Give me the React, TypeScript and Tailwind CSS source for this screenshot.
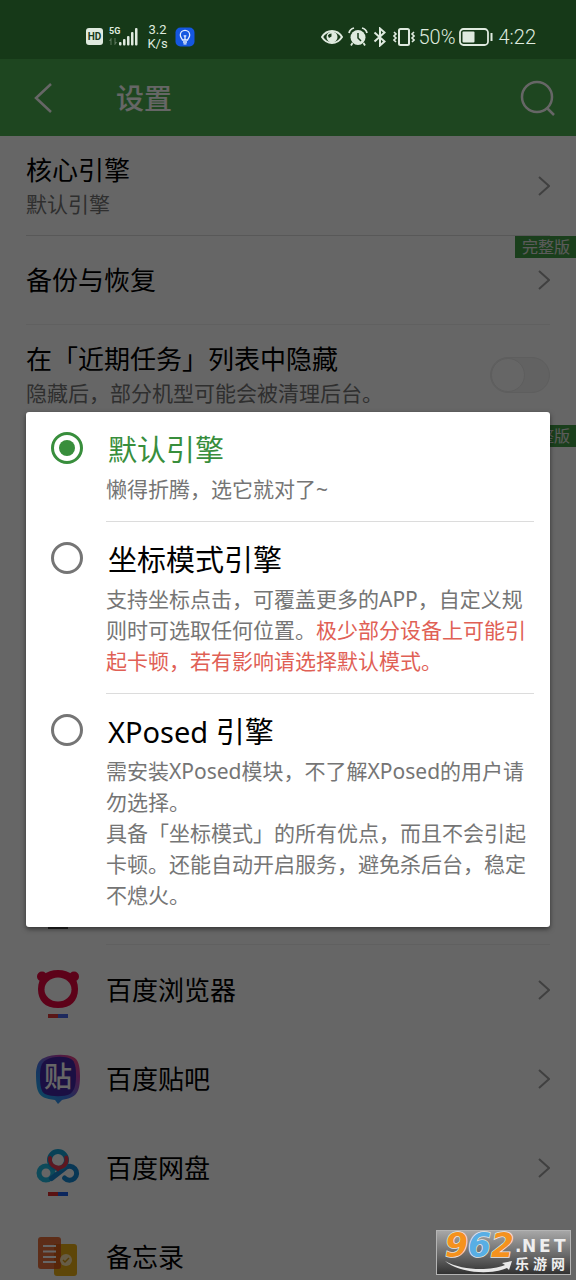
import { useState } from "react";
import type { ReactNode } from "react";

const engines = [
  {
    id: "default",
    title: "默认引擎",
    desc: <>懒得折腾，选它就对了~</>,
  },
  {
    id: "position",
    title: "坐标模式引擎",
    desc: (
      <>
        支持坐标点击，可覆盖更多的APP，自定义规则时可选取任何位置。
        <span className="text-[#e06055]">极少部分设备上可能引起卡顿，若有影响请选择默认模式。</span>
      </>
    ),
  },
  {
    id: "xposed",
    title: "XPosed 引擎",
    desc: (
      <>
        需安装XPosed模块，不了解XPosed的用户请勿选择。
        <br />
        具备「坐标模式」的所有优点，而且不会引起卡顿。还能自动开启服务，避免杀后台，稳定不熄火。
      </>
    ),
  },
];

const BrowserIcon = () => (
  <svg viewBox="0 -4 44 50" className="w-11 h-[50px] overflow-visible">
    <circle cx="6" cy="7.500" r="5" fill="#e8053f" />
    <circle cx="38" cy="7.500" r="5" fill="#e8053f" />
    <path d="M22 1C34 1 42 8 42 20S35 39 22 39 2 32 2 20 10 1 22 1Z" fill="#e8053f" />
    <ellipse cx="22" cy="20.500" rx="13.500" ry="12" fill="#fff" />
    <path d="M12 45h10v4H12z" fill="#e03a3a" />
    <path d="M22 45h10v4H22z" fill="#4a68e8" />
  </svg>
);

const TiebaIcon = () => (
  <svg viewBox="0 0 44 50" className="w-11 h-[50px]">
    <defs>
      <linearGradient id="tieba" x1="0" y1="1" x2="1" y2="0">
        <stop offset="0" stopColor="#12c6f5" />
        <stop offset="0.4" stopColor="#3d7cf0" />
        <stop offset="0.75" stopColor="#c040b0" />
        <stop offset="1" stopColor="#ff4a70" />
      </linearGradient>
    </defs>
    <path d="M8 4C16 0 31 0 37 3c5 2 7 8 7 19 0 12-2 18-8 21-4 2-8 2-10 3l-4 4-3-4C10 45 4 43 2 37 0 32 0 23 0 18 1 10 3 6 8 4Z" fill="url(#tieba)" />
    <path d="M10 6c7-4 19-4 25-1 4 2 5 8 5 17 0 10-2 15-6 18-6 3-18 3-25 0-4-2-5-9-5-17C4 14 5 9 10 6Z" fill="#4427a8" />
    <text x="22" y="33" textAnchor="middle" fontSize="28" fontWeight="500" fill="#fff">
      贴
    </text>
  </svg>
);

const NetdiskIcon = () => (
  <svg viewBox="0 -5 44 50" className="w-11 h-[50px] overflow-visible" fill="none" strokeWidth="5" strokeLinecap="round">
    <circle cx="10" cy="25" r="7" stroke="#22b8e0" />
    <path d="M28.500 30A7 7 0 1 0 29 20L15.500 30.500" stroke="#1689d4" />
    <circle cx="22" cy="12" r="8.500" stroke="#16a4d8" />
    <path d="M14 10a8.500 8.500 0 0 0 16 5c.8-2 .8-4 .2-5.500" stroke="#e83a50" strokeWidth="4" />
    <path d="m17 19 5 4.500 5-4.500z" fill="#e83a50" />
    <path d="M12 44h10v4H12z" fill="#e02f2f" />
    <path d="M22 44h10v4H22z" fill="#1c60e8" />
  </svg>
);

const MemoIcon = () => (
  <svg viewBox="0 0 44 50" className="w-11 h-[50px]">
    <rect x="18" y="12" width="23" height="32" rx="3" fill="#eaae16" />
    <rect x="2" y="5" width="23" height="32" rx="3" fill="#e8703c" />
    <path d="M18 12h7v22q0 3-3 3h-4z" fill="#dd6018" />
    <path d="M7 14h13M7 19.500h13M7 25h13M7 30h13" stroke="#fff" strokeWidth="2" />
    <circle cx="30" cy="28" r="6" fill="#ffe6b0" />
    <path d="m27 28 2 2 4-4" stroke="#d79a10" strokeWidth="1.500" fill="none" />
  </svg>
);

const HiddenAppIcon = () => (
  <svg viewBox="0 -4 44 50" className="w-11 h-[50px] overflow-visible">
    <path d="M12 45h20v4H12z" fill="#555" />
  </svg>
);

const apps = [
  { name: "", icon: <HiddenAppIcon />, divider: true },
  { name: "百度浏览器", icon: <BrowserIcon />, divider: false },
  { name: "百度贴吧", icon: <TiebaIcon />, divider: false },
  { name: "百度网盘", icon: <NetdiskIcon />, divider: false },
  { name: "备忘录", icon: <MemoIcon />, divider: false },
];

const Chevron = () => (
  <svg viewBox="0 0 12 20" className="w-3 h-5 shrink-0" fill="none" stroke="#a0a0a0" strokeWidth="2">
    <path d="m1 1 10 9-10 9" />
  </svg>
);

const FullBadge = () => (
  <span className="absolute right-0 top-0 h-[22px] pl-[7px] pr-[6px] bg-[#439f48] text-[#e4e4e4] text-base leading-[22px]">完整版</span>
);

const Row = ({ children, className }: { children: ReactNode; className: string }) => (
  <div className={`mx-[26px] flex items-center justify-between border-b ${className}`}>{children}</div>
);

const StatusBar = () => (
  <div className="absolute inset-x-0 top-0 z-20 h-[59px] pl-[86px] pr-10 pt-[14px] flex items-center justify-between text-[#dfeadf]">
    <div className="flex items-center">
      <span className="w-[17px] h-[17px] rounded-[3px] bg-[#dfeadf] text-[#183a1a] text-[10px] font-bold leading-[17px] text-center font-['Roboto',sans-serif]">HD</span>
      <svg viewBox="0 0 30 20" className="ml-[6px] w-[30px] h-5 overflow-visible" fill="currentColor">
        <text x="0" y="7" fontSize="9" fontWeight="700" fontFamily="Roboto, sans-serif">5G</text>
        <path d="M2 11 0 14h1.500v4h1v-7zM6 18l2-3H6.500v-4h-1v7z" opacity="0.35" />
        <rect x="10" y="15" width="2.500" height="3.500" rx="1" />
        <rect x="14" y="12" width="2.500" height="6.500" rx="1" />
        <rect x="18" y="9" width="2.500" height="9.500" rx="1" />
        <rect x="22" y="5" width="2.500" height="13.500" rx="1" />
        <rect x="26" y="1" width="2.500" height="17.500" rx="1" />
      </svg>
      <span className="ml-2 w-[21px] text-[13px] leading-[14px] text-center font-['Roboto',sans-serif]">
        3.2
        <br />
        K/s
      </span>
      <svg viewBox="0 0 20 20" className="ml-[7px] w-5 h-5" fill="none" stroke="#e6efff" strokeWidth="1.300">
        <rect x="0.500" y="0.500" width="19" height="19" rx="5" fill="#1557e0" stroke="none" />
        <path d="M7.500 13C7 11 5.300 10.500 5.300 8a4.700 4.700 0 0 1 9.400 0c0 2.500-1.700 3-2.200 5z" />
        <path d="M8 15h4M8.500 16.800h3M10 13V9M8.700 8.500 10 9.500l1.300-1" />
      </svg>
    </div>
    <div className="flex items-center">
      <svg viewBox="0 0 22 16" className="w-[22px] h-4">
        <path d="M1 8C6 0 16 0 21 8c-5 8-15 8-20 0Z" fill="none" stroke="currentColor" strokeWidth="2" />
        <circle cx="11" cy="8" r="5.500" fill="currentColor" />
        <path d="M10.500 4.500v3L8 9 6.800 6.500Q8 4.500 10.500 4.500z" fill="#183a1a" />
      </svg>
      <svg viewBox="0 0 20 20" className="ml-[5px] w-5 h-5" fill="currentColor">
        <circle cx="10" cy="10.500" r="7.500" />
        <path d="M1 6q1-4 5-5M19 6q-1-4-5-5M4.500 16 3 18.500M15.500 16l1.500 2.500" fill="none" stroke="currentColor" strokeWidth="1.800" />
        <path d="M10 6v5l3 3" fill="none" stroke="#183a1a" strokeWidth="1.500" />
      </svg>
      <svg viewBox="0 0 14 20" className="ml-[5px] w-[14px] h-5" fill="none" stroke="currentColor" strokeWidth="2">
        <path d="m1.500 5.500 10 9L7 18.500v-17l4.500 4-10 9" />
      </svg>
      <svg viewBox="0 0 22 20" className="ml-[6px] w-[22px] h-5" fill="none" stroke="currentColor" strokeWidth="2">
        <rect x="6" y="2" width="10" height="16" rx="1.500" />
        <path d="m1 5 2 2-2 2 2 2-2 2 2 2M21 5l-2 2 2 2-2 2 2 2-2 2" strokeWidth="1.600" />
      </svg>
      <span className="ml-1 w-9 text-[20px] leading-6 whitespace-nowrap font-['Roboto',sans-serif] font-light">50%</span>
      <svg viewBox="0 0 34 20" className="ml-1 w-[34px] h-5">
        <rect x="1" y="2" width="28" height="16" rx="3.500" fill="none" stroke="currentColor" strokeWidth="1.800" />
        <rect x="3.500" y="4.500" width="12" height="11" rx="1" fill="currentColor" />
        <path d="M32.500 6v8" stroke="currentColor" strokeWidth="2" />
      </svg>
      <span className="ml-[6px] text-[20px] leading-6 font-['Roboto',sans-serif] font-light">4:22</span>
    </div>
  </div>
);

const Watermark = () => (
  <svg viewBox="0 0 135 45" className="absolute right-[5px] bottom-[5px] z-30 w-[135px] h-[45px] overflow-visible">
    <defs>
      <linearGradient id="plate" x1="0" y1="0" x2="0" y2="1">
        <stop offset="0" stopColor="#a8a8a8" />
        <stop offset="0.55" stopColor="#6a6a6a" />
        <stop offset="1" stopColor="#303030" />
      </linearGradient>
    </defs>
    <rect x="0.500" y="0.500" width="134" height="44" fill="url(#plate)" stroke="#b4b4b4" />
    <g fontFamily="DejaVu Sans, sans-serif" fontWeight="700" fontStyle="italic" fontSize="33" stroke="#e8e8e8" strokeWidth="1.500" paintOrder="stroke">
      <text x="9" y="27" fill="#f5921e">9</text>
      <text x="32" y="27" fill="#58aee4">6</text>
      <text x="55" y="27" fill="#f5921e">2</text>
    </g>
    <path d="M9 31c18 10 45 10 60 4l-3-2 10-2-3 9-2-2C52 46 22 42 9 31Z" fill="#e8e8e8" />
    <g fill="#eee" fontFamily="DejaVu Sans, sans-serif" fontWeight="700" fontSize="17">
      <text x="79" y="22">.</text>
      <text x="86" y="22">N</text>
      <text x="103" y="22">E</text>
      <text x="118" y="22">T</text>
    </g>
    <g fill="#eee" fontWeight="700" fontSize="14">
      <text x="79" y="39">乐</text>
      <text x="97" y="39">游</text>
      <text x="115" y="39">网</text>
    </g>
  </svg>
);

const App = () => {
  const [engine, setEngine] = useState("default");

  return (
    <div className="relative h-screen overflow-hidden bg-white text-black font-['Noto_Sans','Noto_Sans_CJK_SC',sans-serif]">
      <StatusBar />

      <div className="h-[59px] bg-[#388e3c]" />
      <header className="h-[77px] pl-[34px] pr-5 flex items-center bg-[#4caf50] text-white">
        <button aria-label="返回">
          <svg viewBox="0 0 18 30" className="w-[18px] h-[30px]" fill="none" stroke="currentColor" strokeWidth="2.500">
            <path d="M17 1 2 15l15 14" />
          </svg>
        </button>
        <h1 className="ml-16 flex-1 text-[28px] leading-10 font-medium">设置</h1>
        <button aria-label="搜索">
          <svg viewBox="0 0 36 36" className="w-9 h-9" fill="none" stroke="currentColor" strokeWidth="2.500">
            <circle cx="17" cy="17" r="15" />
            <path d="m27 28 7 7" />
          </svg>
        </button>
      </header>

      <main>
        <Row className="h-[100px] border-[#dcdcdc]">
          <div>
            <h2 className="text-[26px] leading-9">核心引擎</h2>
            <p className="text-[21px] leading-8 text-[#757575]">默认引擎</p>
          </div>
          <Chevron />
        </Row>
        <div className="relative">
          <FullBadge />
          <Row className="h-[89px] border-[#f0f0f0]">
            <h2 className="text-[26px] leading-9">备份与恢复</h2>
            <Chevron />
          </Row>
        </div>
        <Row className="h-[100px] border-[#f0f0f0]">
          <label htmlFor="hide-recent">
            <span className="block text-[26px] leading-9">在「近期任务」列表中隐藏</span>
            <span className="block text-[21px] leading-8 text-[#757575]">隐藏后，部分机型可能会被清理后台。</span>
          </label>
          <input
            id="hide-recent"
            type="checkbox"
            className="appearance-none flex w-[60px] h-9 shrink-0 rounded-full border border-[#eaeaea] bg-[#f4f4f4] before:size-[34px] before:rounded-full before:bg-white before:border before:border-[#eaeaea] checked:justify-end checked:bg-[#4caf50]"
          />
        </Row>
        <div className="relative h-[431px]">
          <FullBadge />
        </div>

        {apps.map((app, index) => (
          <div key={index} className="h-[89px] pl-9 pr-[26px] flex items-center gap-[26px]">
            {app.icon}
            <div className={`flex-1 h-full flex items-center justify-between ${app.divider ? "border-b border-[#f0f0f0]" : ""}`}>
              <span className="text-[26px] leading-9">{app.name}</span>
              <Chevron />
            </div>
          </div>
        ))}
      </main>

      {/* dialog */}
      <div className="absolute inset-0 z-10 px-[26px] pt-[58px] flex items-center bg-black/60">
        <div role="dialog" aria-label="核心引擎" className="w-full bg-white rounded-[3px] shadow-[0_2px_5px_rgba(0,0,0,0.5)]">
          {engines.map((item) => (
            <label key={item.id} className="group pl-[25px] pr-4 flex gap-[23px]">
              <input
                type="radio"
                name="engine"
                checked={engine === item.id}
                onChange={() => setEngine(item.id)}
                className="appearance-none mt-5 size-8 shrink-0 grid place-content-center rounded-full border-[3px] border-[#757575] before:size-4 before:rounded-full checked:border-[#388e3c] checked:before:bg-[#388e3c]"
              />
              <span className="flex-1 pt-[14px] pb-4 border-b border-[#dcdcdc] group-last:border-b-0">
                <span className="block pl-[2px] text-[29px] leading-[48px] group-has-checked:text-[#388e3c]">{item.title}</span>
                <span className="block text-[21px] leading-[31px] text-[#757575]">{item.desc}</span>
              </span>
            </label>
          ))}
        </div>
      </div>

      <Watermark />
    </div>
  );
};

export default App;
